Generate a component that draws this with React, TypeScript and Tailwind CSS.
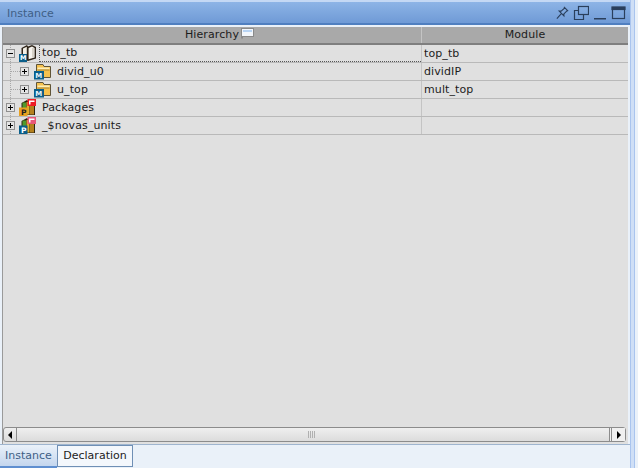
import type { ReactNode } from "react"

const iconFont = "'DejaVu Sans', sans-serif"

function BookIcon() {
  return (
    <svg width="18" height="17" viewBox="0 0 18 17" className="shrink-0">
      <path d="M2.5 3 L8 0 L9 1.5 L13 0 L17 2 V13.5 L9 16 L2.5 13.5 Z" fill="#2e2418" />
      <path d="M4 3.6 L7.8 1.8 V13.6 L4 12.4 Z" fill="#f4f0e6" />
      <path d="M9.6 3 L13 1.6 L15.6 3 V12.4 L9.6 14.2 Z" fill="#f7f4ee" />
      <path d="M14 3 V12.5" stroke="#b9b2a3" />
      <rect x="0" y="9" width="8" height="8" fill="#0b5f8a" />
      <text x="0.9" y="15.4" fontSize="6.5" fontWeight="700" fontFamily={iconFont} fill="#fff">
        M
      </text>
    </svg>
  )
}

function FolderIcon() {
  return (
    <svg width="18" height="17" viewBox="0 0 18 17" className="shrink-0">
      <path d="M2.5 1.5 H9 L10 3.5 H16.5 V14.5 H2.5 Z" fill="#f5c14e" stroke="#5f5438" />
      <path d="M3.5 4.5 H15.5 V6.5 H3.5 Z" fill="#fdeeb8" />
      <path d="M3.5 7 H15.5" stroke="#a8822a" />
      <rect x="0" y="8" width="10" height="8.5" fill="#0b5f8a" />
      <text x="1.2" y="15.4" fontSize="7" fontWeight="700" fontFamily={iconFont} fill="#e8f4fa">
        M
      </text>
    </svg>
  )
}

function PackageIcon({ badge, badgeText, tag }: { badge: string; badgeText: string; tag: string }) {
  return (
    <svg width="18" height="17" viewBox="0 0 18 17" className="shrink-0">
      <path d="M2.5 4 L8 1 L10 3 L16 2 V16 H2.5 Z" fill="#2e2410" />
      <rect x="3.5" y="3.5" width="3.5" height="6" fill="#4f9a2c" />
      <rect x="7.5" y="3" width="3" height="12.5" fill="#e0ac2c" />
      <rect x="11" y="6" width="4" height="9.5" fill="#b5811e" />
      <rect x="8.5" y="0" width="8.5" height="7" fill={tag} />
      <path d="M10 1.5 H15.5 V3 H11.5 V5.5 H10 Z" fill="#fff" />
      <rect x="0" y="8.5" width="8.5" height="8.5" fill={badge} />
      <text x="2" y="15.6" fontSize="7.5" fontWeight="700" fontFamily={iconFont} fill={badgeText}>
        P
      </text>
    </svg>
  )
}

function Expander({ open }: { open?: boolean }) {
  return (
    <span className="relative z-10 flex h-[9px] w-[9px] shrink-0 items-center justify-center border border-[#8f8f8f] bg-[#e4e4e4]">
      <span className="absolute h-px w-[5px] bg-black" />
      {!open && <span className="absolute h-[5px] w-px bg-black" />}
    </span>
  )
}

type Row = {
  name: string
  module: string
  depth: number
  icon: ReactNode
  open?: boolean
  current?: boolean
}

const rows: Row[] = [
  { name: "top_tb", module: "top_tb", depth: 0, icon: <BookIcon />, open: true, current: true },
  { name: "divid_u0", module: "dividIP", depth: 1, icon: <FolderIcon /> },
  { name: "u_top", module: "mult_top", depth: 1, icon: <FolderIcon /> },
  { name: "Packages", module: "", depth: 0, icon: <PackageIcon badge="#e8a020" badgeText="#222" tag="#ee1c25" /> },
  { name: "_$novas_units", module: "", depth: 0, icon: <PackageIcon badge="#0b5f8a" badgeText="#fff" tag="#e8587a" /> },
]

export default function App() {
  return (
    <div className="flex h-[468px] w-[638px] overflow-hidden bg-[#eaf1f9] font-['DejaVu_Sans',sans-serif] text-[11px] tracking-[0.1px] text-[#1c1c1c]">
      <div className="flex h-full w-[630px] flex-col">
        {/* Title bar */}
        <div className="flex h-[25px] shrink-0 items-center justify-between border-t-2 border-b-2 border-t-[#c4d8f4] border-b-[#4f7fc0] bg-gradient-to-b from-[#8db4e6] to-[#6f9ad6] pl-[7px] pr-[4px]">
          <span className="pt-[3px] tracking-normal text-[#3f5f86]">Instance</span>
          <div className="flex items-center gap-[3px] text-[#2a3f5c]">
            <svg width="15" height="16" viewBox="0 0 16 16" fill="none" stroke="currentColor" strokeWidth="1.2">
              <path d="M9.5 1.5 L14 6 M10.5 2.5 L6.5 6 L4.5 6 L9.5 11 L9.5 9 L13 5.5 M7 8.5 L2 14" />
            </svg>
            <svg width="16" height="16" viewBox="0 0 16 16" fill="none" stroke="currentColor" strokeWidth="1.2">
              <rect x="5.5" y="1.5" width="10" height="8" />
              <path d="M5.5 5.5 H1.5 V14.5 H10.5 V9.5" />
            </svg>
            <svg width="16" height="16" viewBox="0 0 16 16" fill="currentColor">
              <rect x="2" y="13" width="12" height="1.5" />
            </svg>
            <svg width="15" height="16" viewBox="0 0 15 16" fill="none" stroke="currentColor" strokeWidth="1.2">
              <rect x="1.5" y="2.5" width="12" height="11" />
              <rect x="1" y="2" width="13" height="2.5" fill="currentColor" />
            </svg>
          </div>
        </div>

        {/* Tree table */}
        <div className="mx-[2px] mt-[2px] flex min-h-0 flex-1 flex-col border-l border-[#9a9a9a] bg-[#e0e0e0]">
          <div className="flex h-[18px] shrink-0 border-b-2 border-[#7f7f7f] bg-[#a9a9a9]">
            <div className="flex w-[419px] items-center justify-center border-r border-[#c4c4c4] pt-px">
              <span className="relative">
                Hierarchy
                <svg width="13" height="11" viewBox="0 0 13 11" className="absolute -right-[15px] top-[1px]">
                  <rect x="0.5" y="0.5" width="12" height="8" fill="#f2f6fb" stroke="#8a8a8a" />
                  <rect x="2" y="2" width="9" height="2" fill="#b8d4f4" />
                  <path d="M1 9 V10.5" stroke="#6a6a6a" />
                </svg>
              </span>
            </div>
            <div className="flex flex-1 items-center justify-center pt-px">Module</div>
          </div>

          <div className="flex-1">
            {rows.map((row) => (
              <div key={row.name} className="flex h-[18px] border-b border-[#b9b9b9]">
                <div
                  className={`relative flex w-[419px] items-center border-r border-[#c4c4c4] ${row.depth ? "pl-[17px]" : "pl-[3px]"}`}
                >
                  {/* tree guide lines */}
                  <span className="absolute bottom-0 left-[7px] top-0 border-l border-dotted border-[#a8a8a8]" />
                  {row.depth > 0 && (
                    <span className="absolute left-[7px] top-[8px] w-[10px] border-t border-dotted border-[#a8a8a8]" />
                  )}
                  <Expander open={row.open} />
                  <span className={`flex ${row.depth ? "ml-[5px]" : "ml-[4px]"}`}>{row.icon}</span>
                  <span
                    className={`ml-[2px] flex h-full flex-1 items-center pt-px ${
                      row.current ? "border-b border-l border-dotted border-[#555] pl-[2px]" : "pl-[3px]"
                    }`}
                  >
                    {row.name}
                  </span>
                </div>
                <div className="flex flex-1 items-center pl-[2px] pt-px">{row.module}</div>
              </div>
            ))}
          </div>

          {/* Horizontal scrollbar */}
          <div className="mb-[2px] mr-[2px] flex h-[15px] shrink-0 items-stretch rounded-[3px] border border-[#8c8c8c] bg-gradient-to-b from-[#efefef] to-[#dcdcdc]">
            <div className="flex w-[13px] items-center justify-center border-r border-[#8c8c8c]">
              <span className="h-0 w-0 border-y-[4px] border-r-[4px] border-y-transparent border-r-black" />
            </div>
            <div className="flex flex-1 items-center justify-center gap-px pr-[4px]">
              <span className="h-[7px] w-px bg-[#b0b0b0]" />
              <span className="h-[7px] w-px bg-[#b0b0b0]" />
              <span className="h-[7px] w-px bg-[#b0b0b0]" />
              <span className="h-[7px] w-px bg-[#b0b0b0]" />
            </div>
            <div className="flex w-[16px] items-center justify-center border-l-[3px] border-double border-[#8c8c8c] bg-[#f0f0f0]">
              <span className="h-0 w-0 border-y-[4px] border-l-[4px] border-y-transparent border-l-black" />
            </div>
          </div>
        </div>

        {/* Bottom tabs */}
        <div className="flex h-[24px] shrink-0 border-t border-[#9fb5cf]">
          <div className="flex w-[57px] items-center justify-center border-b-2 border-[#5f8fd0] bg-gradient-to-b from-[#eaf1f9] to-[#c4d6ee] pt-px tracking-normal text-[#3f5f86]">
            Instance
          </div>
          <div className="flex h-[22px] w-[76px] items-center justify-center self-start border border-[#6f8fb5] bg-[#f3f7fc] pt-px tracking-normal">
            Declaration
          </div>
        </div>
      </div>
      <div className="h-full w-[5px] border-x border-[#a9c4ee] bg-[#cfdff6]" />
    </div>
  )
}
